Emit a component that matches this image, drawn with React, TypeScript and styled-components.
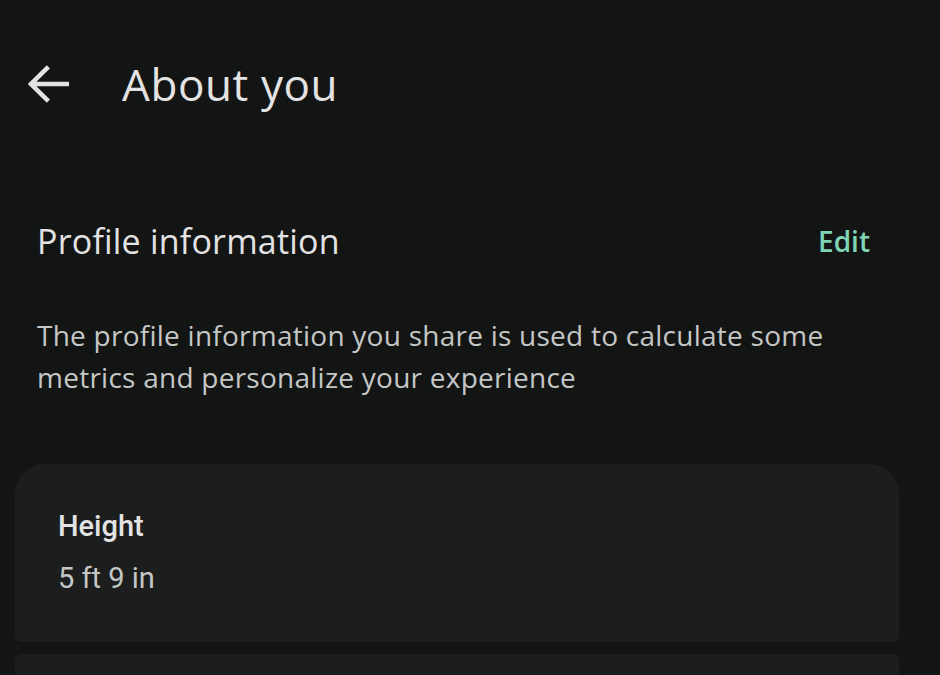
import React from "react";
import styled, {createGlobalStyle} from "styled-components";

const GlobalStyle = createGlobalStyle`
    html, body {
        margin: 0;
        padding: 0;
        background: #131414;
    }
    body {
        font-family: "Open Sans", "Noto Sans", sans-serif;
        color: #e3e3e3;
    }
`

const Page = styled.div`
    width: 940px;
    height: 675px;
    overflow: hidden;
    background: #131414;
`

const TopBar = styled.div`
    display: flex;
    align-items: center;
    height: 72px;
    margin-top: 48px;
    padding-left: 18px;
`

const BackButton = styled.button`
    display: flex;
    align-items: center;
    justify-content: center;
    width: 60px;
    height: 60px;
    padding: 0;
    border: none;
    background: transparent;
    color: #e3e3e3;
    cursor: pointer;
`

const Title = styled.h1`
    margin: 0 0 0 44px;
    font-size: 44px;
    font-weight: 400;
    letter-spacing: 0.6px;
    color: #e3e3e3;
`

const SectionHeader = styled.div`
    display: flex;
    align-items: center;
    justify-content: space-between;
    margin-top: 98px;
    padding: 0 70px 0 37px;
`

const SectionTitle = styled.h2`
    margin: 0;
    font-size: 34px;
    font-weight: 400;
    letter-spacing: 0.2px;
    color: #e3e3e3;
`

const EditLink = styled.span`
    font-size: 28px;
    font-weight: 600;
    color: #7fd4b6;
    cursor: pointer;
`

const Description = styled.p`
    margin: 50px 0 0;
    padding: 0 80px 0 37px;
    font-size: 28px;
    letter-spacing: 0.25px;
    line-height: 42px;
    color: #c4c7c5;
`

const CardList = styled.div`
    display: flex;
    flex-direction: column;
    gap: 12px;
    margin-top: 66px;
    padding: 0 41px 0 15px;
`

const Card = styled.div<{ $first?: boolean }>`
    height: 178px;
    box-sizing: border-box;
    padding: 45px 43px 0;
    background: #1c1d1d;
    border-radius: ${p => p.$first ? "30px 30px 6px 6px" : "6px 6px 6px 6px"};
`

const CardLabel = styled.div`
    font-family: Roboto, "Liberation Sans", sans-serif;
    font-size: 29px;
    font-weight: 500;
    color: #e3e3e3;
    line-height: 34px;
`

const CardValue = styled.div`
    margin-top: 18px;
    font-family: Roboto, "Liberation Sans", sans-serif;
    font-size: 29px;
    color: #c4c7c5;
    line-height: 34px;
`

const App = () => {
    return (
        <Page>
            <GlobalStyle/>
            <TopBar>
                <BackButton aria-label="Back">
                    <svg width="60" height="60" viewBox="0 0 24 24">
                        <path d="M19.5 12H5.5M11.5 5.8L5.2 12l6.3 6.2" fill="none" stroke="currentColor"
                              strokeWidth="1.8" strokeLinecap="square"/>
                    </svg>
                </BackButton>
                <Title>About you</Title>
            </TopBar>

            <SectionHeader>
                <SectionTitle>Profile information</SectionTitle>
                <EditLink>Edit</EditLink>
            </SectionHeader>

            <Description>
                The profile information you share is used to calculate some metrics and personalize your experience
            </Description>

            <CardList>
                <Card $first>
                    <CardLabel>Height</CardLabel>
                    <CardValue>5 ft 9 in</CardValue>
                </Card>
                <Card/>
            </CardList>
        </Page>
    )
}

export default App
